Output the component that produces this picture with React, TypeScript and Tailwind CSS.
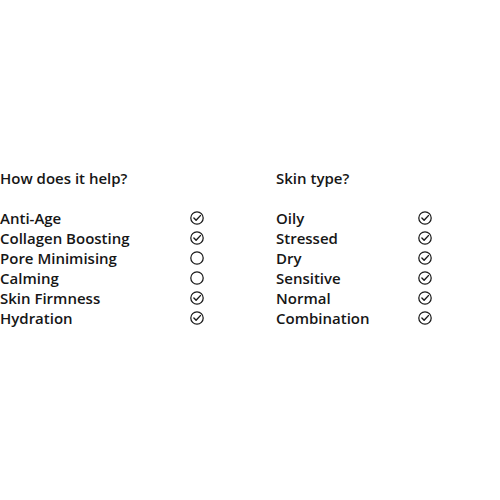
const helps: [string, boolean][] = [
  ['Anti-Age', true],
  ['Collagen Boosting', true],
  ['Pore Minimising', false],
  ['Calming', false],
  ['Skin Firmness', true],
  ['Hydration', true],
];

const skinTypes: [string, boolean][] = [
  ['Oily', true],
  ['Stressed', true],
  ['Dry', true],
  ['Sensitive', true],
  ['Normal', true],
  ['Combination', true],
];

function CheckCircle({ checked }: { checked: boolean }) {
  return (
    <svg width="14" height="14" viewBox="0 0 14 14" fill="none" className="block">
      <circle cx="7" cy="7" r="6.2" stroke="#1a1a1a" strokeWidth="1.25" />
      {checked && (
        <path
          d="M3.9 7.1L6.1 9.3L10.4 4.6"
          stroke="#1a1a1a"
          strokeWidth="1.4"
          strokeLinecap="round"
          strokeLinejoin="round"
        />
      )}
    </svg>
  );
}

function Column({
  title,
  items,
  labelCol,
}: {
  title: string;
  items: [string, boolean][];
  labelCol: string;
}) {
  return (
    <div>
      <h3 className="text-[15px] leading-5 font-semibold">{title}</h3>
      <ul className="mt-5">
        {items.map(([label, on]) => (
          <li key={label} className={`grid ${labelCol} items-center h-5`}>
            <span className="text-[15px] leading-5 font-semibold">{label}</span>
            <CheckCircle checked={on} />
          </li>
        ))}
      </ul>
    </div>
  );
}

export default function App() {
  return (
    <div
      className="w-[500px] h-[500px] bg-white text-[#161616] pt-[168px]"
      style={{ fontFamily: '"Open Sans", "Noto Sans", sans-serif' }}
    >
      <div className="flex">
        <div className="w-[276px]">
          <Column title="How does it help?" items={helps} labelCol="grid-cols-[190px_14px]" />
        </div>
        <Column title="Skin type?" items={skinTypes} labelCol="grid-cols-[142px_14px]" />
      </div>
    </div>
  );
}
